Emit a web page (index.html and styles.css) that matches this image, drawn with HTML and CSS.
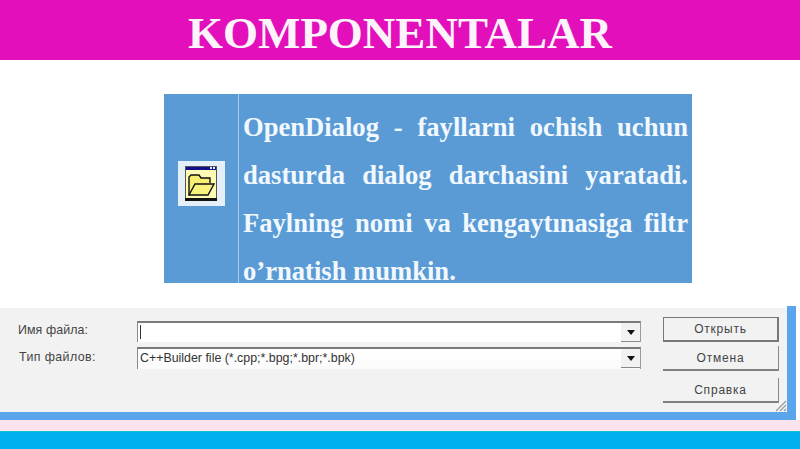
FILE: index.html
```html
<!DOCTYPE html>
<html lang="uz">
<head>
<meta charset="utf-8">
<title>Komponentalar</title>
<link rel="stylesheet" href="styles.css">
</head>
<body>
<header class="banner"><h1 class="banner-title">KOMPONENTALAR</h1></header>
<main class="content">
  <section class="card">
    <div class="card-icon-cell">
      <div class="tool-icon">
        <svg width="32" height="35" viewBox="0 0 32 35" aria-hidden="true">
          <rect x="0.5" y="0.5" width="31" height="34" fill="#fdfbb4" stroke="#555"/>
          <rect x="1" y="1" width="30" height="3" fill="#10108a"/>
          <rect x="25" y="1" width="2" height="2" fill="#eee"/><rect x="28" y="1" width="2" height="2" fill="#eee"/>
          <rect x="0" y="32" width="32" height="3" fill="#111"/>
          <path d="M4 29V11l2-2h8l2 3h9v5" fill="#f7ef72" stroke="#111" stroke-width="1.4"/>
          <path d="M4 29l6-11h19l-6 11z" fill="#f9f27c" stroke="#111" stroke-width="1.4"/>
        </svg>
      </div>
    </div>
    <p class="card-text"><b>OpenDialog - fayllarni ochish uchun dasturda dialog darchasini yaratadi. Faylning nomi va kengaytınasiga filtr o’rnatish mumkin.</b></p>
  </section>
</main>
<section class="dialog-frame">
  <div class="dialog">
    <div class="fields">
      <label class="field-label">Имя файла:</label>
      <div class="combo"><span class="combo-text"><span class="caret"></span></span><span class="combo-btn"><i class="arrow"></i></span></div>
      <label class="field-label field-label-2">Тип файлов:</label>
      <div class="combo combo-2"><span class="combo-text">C++Builder file (*.cpp;*.bpg;*.bpr;*.bpk)</span><span class="combo-btn"><i class="arrow"></i></span></div>
    </div>
    <div class="buttons">
      <button class="btn btn-default">Открыть</button>
      <button class="btn">Отмена</button>
      <button class="btn">Справка</button>
    </div>
    <svg class="grip" width="14" height="14" viewBox="0 0 14 14" aria-hidden="true"><path d="M13 3L3 13M13 7L7 13M13 11L11 13" stroke="#9a9a9a" stroke-width="1.2" fill="none"/></svg>
  </div>
</section>
<div class="pale-strip"></div>
<footer class="footer-bar"></footer>
</body>
</html>
```
FILE: styles.css
```css
* { box-sizing: border-box; }
html, body { margin: 0; padding: 0; }
body {
  width: 800px;
  height: 449px;
  overflow: hidden;
  background: #fff;
  display: flex;
  flex-direction: column;
  font-family: "Liberation Sans", Arial, sans-serif;
}
.banner {
  height: 60px;
  background: #e20fbb;
  display: flex;
  justify-content: center;
  align-items: center;
  flex: none;
}
.banner-title {
  margin: 0;
  color: #fdf3fb;
  font: bold 45px/1 "Liberation Serif", serif;
  position: relative;
  top: 3px;
}
.content {
  height: 246px;
  flex: none;
  padding: 34px 0 0 164px;
}
.card {
  width: 528px;
  height: 189px;
  background: #5b9bd5;
  display: flex;
}
.card-icon-cell {
  width: 75px;
  flex: none;
  border-right: 1px solid #a9cdf0;
  padding: 67px 0 0 14px;
}
.tool-icon {
  width: 47px;
  height: 45px;
  padding-right: 2px;
  background: #e4effa;
  display: flex;
  justify-content: center;
  align-items: center;
}
.tool-icon svg { display: block; }
.card-text {
  margin: 0;
  flex: 1;
  padding: 9px 4px 0 4px;
  color: #f1f8fe;
  font: 26.6px/48px "Liberation Serif", serif;
  text-align: justify;
}
.dialog-frame {
  width: 796px;
  height: 114px;
  flex: none;
  background: #5aa5ec;
  padding: 0 9px 8px 0;
}
.dialog {
  height: 106px;
  background: #f2f2f2;
  border-top: 2px solid #fff;
  display: flex;
  position: relative;
  padding: 13px 0 0 18px;
}
.fields {
  width: 623px;
  flex: none;
  display: grid;
  grid-template-columns: 119px 1fr;
  grid-template-rows: 21px 22px;
  row-gap: 5px;
  align-content: start;
  font-size: 12.4px;
  color: #444;
}
.field-label { line-height: 18px; letter-spacing: 0.1px; }
.field-label-2 { padding-left: 1px; line-height: 21px; letter-spacing: 0.4px; }
.combo {
  display: flex;
  height: 21px;
  background: #fff;
  border-top: 2px solid #7a7a7a;
  border-left: 1px solid #8a8a8a;
  border-right: 1px solid #9a9a9a;
}
.combo-2 { height: 22px; background: linear-gradient(#fff, #fbfbfb); }
.combo-text {
  flex: 1;
  line-height: 18px;
  padding-left: 2px;
  color: #333;
  white-space: nowrap;
}
.caret {
  display: inline-block;
  width: 1px;
  height: 14px;
  margin-top: 2px;
  background: #333;
}
.combo-btn {
  width: 19px;
  height: 19px;
  background: #f2f2f2;
  border-bottom: 1px solid #888;
  display: flex;
  justify-content: center;
  align-items: center;
}
.arrow {
  width: 0;
  height: 0;
  border: 4px solid transparent;
  border-top: 5px solid #111;
  border-bottom: 0;
}
.buttons {
  margin-left: 22px;
  width: 116px;
  flex: none;
  display: flex;
  flex-direction: column;
  margin-top: -4px;
}
.btn {
  height: 25px;
  margin-bottom: 7px;
  padding: 0;
  background: #f2f2f2;
  border: 0;
  border-right: 1px solid #888;
  border-bottom: 2px solid #808080;
  font: 12px "Liberation Sans", Arial, sans-serif;
  letter-spacing: 0.8px;
  color: #444;
}
.btn-default {
  border: 1px solid #777;
  border-right-width: 2px;
  border-bottom-width: 2px;
  margin-bottom: 4px;
}
.grip { position: absolute; right: 0; bottom: 0; }
.pale-strip {
  height: 11px;
  flex: none;
  background: #fbe4ee;
}
.footer-bar {
  flex: 1;
  background: #00b0ec;
  border-top: 1px solid #16c4d8;
}
```
